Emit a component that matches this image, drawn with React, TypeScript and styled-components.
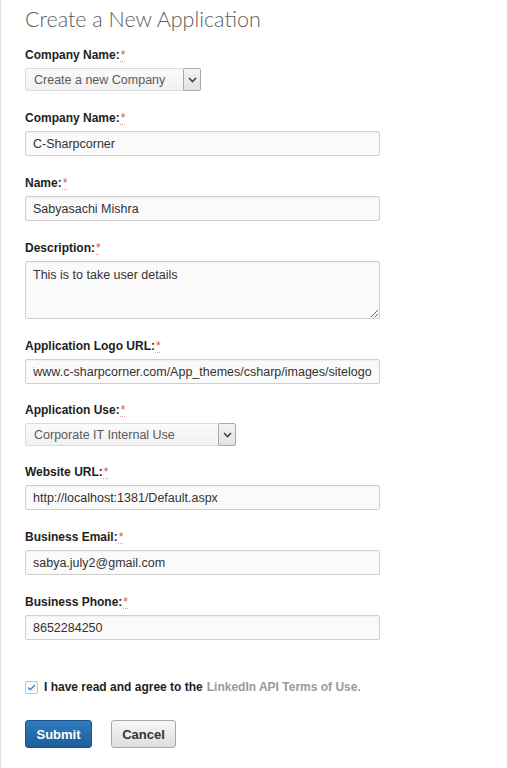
import React, { useEffect, useRef } from 'react'
import styled, { createGlobalStyle } from 'styled-components'

const GlobalStyle = createGlobalStyle`
  html, body {
    margin: 0;
    padding: 0;
    background: #fff;
  }
  body {
    font-family: 'Liberation Sans', Arial, sans-serif;
    color: #222;
  }
`

const Page = styled.div`
  box-sizing: border-box;
  min-height: 768px;
  border-left: 1px solid #e4e4e4;
  padding: 6px 0 0 24px;
`

const Title = styled.h1`
  margin: 0 0 15px;
  font-family: Lato, 'Open Sans', sans-serif;
  font-weight: 300;
  font-size: 21.5px;
  line-height: 26px;
  color: #5c5c5c;
`

const Form = styled.form`
  display: flex;
  flex-direction: column;
`

const Field = styled.div<{ $compact?: boolean }>`
  display: flex;
  flex-direction: column;
  align-items: flex-start;
  margin-bottom: ${p => (p.$compact ? 18 : 19)}px;
`

const Label = styled.label`
  font-size: 12px;
  font-weight: 700;
  line-height: 16px;
  color: #1e1e1e;
  margin-bottom: 5px;
`

const Req = styled.abbr`
  color: #d9534f;
  font-weight: 400;
  text-decoration: underline dotted #e8a0a0;
  text-underline-offset: 2px;
  margin-left: 1px;
`

const inputBase = `
  box-sizing: border-box;
  width: 355px;
  border: 1px solid #cfcfcf;
  border-radius: 2px;
  background: #fafafa;
  box-shadow: inset 0 1px 1px rgba(0, 0, 0, 0.04);
  font-family: 'Liberation Sans', Arial, sans-serif;
  font-size: 12.5px;
  color: #333;
  padding: 0 7px;
  outline: none;
`

const TextInput = styled.input`
  ${inputBase}
  height: 25px;
`

const TextArea = styled.textarea`
  ${inputBase}
  height: 58px;
  padding: 5px 7px;
  line-height: 16px;
  resize: vertical;
`

const SelectWrap = styled.div<{ $width: number }>`
  position: relative;
  width: ${p => p.$width}px;
  height: 23px;
`

const Select = styled.select`
  box-sizing: border-box;
  appearance: none;
  width: 100%;
  height: 100%;
  border: 1px solid #dcdcdc;
  border-radius: 2px;
  background: linear-gradient(#fbfbfb, #f1f1f1);
  font-family: 'Liberation Sans', Arial, sans-serif;
  font-size: 12.5px;
  color: #5a5a5a;
  padding: 0 8px;
  outline: none;
`

const Arrow = styled.span`
  position: absolute;
  top: 0;
  right: 0;
  box-sizing: border-box;
  width: 18px;
  height: 23px;
  border: 1px solid #a9a9a9;
  border-radius: 2px;
  background: linear-gradient(#f4f4f4, #e2e2e2);
  display: flex;
  align-items: center;
  justify-content: center;
  pointer-events: none;
`

const Agree = styled.div`
  display: flex;
  align-items: center;
  margin-top: 21px;
  font-size: 12px;
  font-weight: 700;
  color: #1e1e1e;
`

const Check = styled.span`
  box-sizing: border-box;
  width: 13px;
  height: 13px;
  border: 1px solid #c4c4c4;
  border-radius: 2px;
  background: #fcfcfc;
  display: flex;
  align-items: center;
  justify-content: center;
  margin-right: 6px;
`

const TermsLink = styled.a`
  color: #9a9a9a;
  text-decoration: none;
  margin-left: 4px;
`

const Buttons = styled.div`
  display: flex;
  gap: 19px;
  margin-top: 26px;
`

const Button = styled.button<{ $primary?: boolean }>`
  box-sizing: border-box;
  height: 28px;
  width: ${p => (p.$primary ? 67 : 65)}px;
  padding: 0;
  border-radius: 3px;
  font-family: 'Liberation Sans', Arial, sans-serif;
  font-size: 13px;
  font-weight: 700;
  cursor: pointer;
  border: 1px solid ${p => (p.$primary ? '#1a5488' : '#a8a8a8')};
  color: ${p => (p.$primary ? '#fff' : '#333')};
  background: ${p =>
    p.$primary
      ? 'linear-gradient(#2f7cbf, #1d5e9a)'
      : 'linear-gradient(#f7f7f7, #dedede)'};
`

const Chevron = () => (
  <svg width="9" height="6" viewBox="0 0 9 6">
    <path d="M1 1l3.5 3.5L8 1" fill="none" stroke="#444" strokeWidth="1.6" />
  </svg>
)

const Required = () => <Req title="required">*</Req>

const App = () => {
  const logoRef = useRef<HTMLInputElement>(null)

  useEffect(() => {
    if (logoRef.current) logoRef.current.scrollLeft = logoRef.current.scrollWidth
  }, [])

  return (
    <Page>
      <GlobalStyle />
      <Title>Create a New Application</Title>
      <Form onSubmit={e => e.preventDefault()}>
        <Field>
          <Label>Company Name:<Required /></Label>
          <SelectWrap $width={176}>
            <Select defaultValue="new">
              <option value="new">Create a new Company</option>
            </Select>
            <Arrow><Chevron /></Arrow>
          </SelectWrap>
        </Field>
        <Field>
          <Label>Company Name:<Required /></Label>
          <TextInput defaultValue="C-Sharpcorner" />
        </Field>
        <Field>
          <Label>Name:<Required /></Label>
          <TextInput defaultValue="Sabyasachi Mishra" />
        </Field>
        <Field>
          <Label>Description:<Required /></Label>
          <TextArea defaultValue="This is to take user details" />
        </Field>
        <Field $compact>
          <Label>Application Logo URL:<Required /></Label>
          <TextInput
            ref={logoRef}
            defaultValue="http://www.c-sharpcorner.com/App_themes/csharp/images/sitelogo"
          />
        </Field>
        <Field $compact>
          <Label>Application Use:<Required /></Label>
          <SelectWrap $width={211}>
            <Select defaultValue="corp">
              <option value="corp">Corporate IT Internal Use</option>
            </Select>
            <Arrow><Chevron /></Arrow>
          </SelectWrap>
        </Field>
        <Field>
          <Label>Website URL:<Required /></Label>
          <TextInput defaultValue="http://localhost:1381/Default.aspx" />
        </Field>
        <Field>
          <Label>Business Email:<Required /></Label>
          <TextInput defaultValue="sabya.july2@gmail.com" />
        </Field>
        <Field>
          <Label>Business Phone:<Required /></Label>
          <TextInput defaultValue="8652284250" />
        </Field>
        <Agree>
          <Check>
            <svg width="9" height="7" viewBox="0 0 9 7">
              <path d="M1 3.5l2.3 2.3L8 1" fill="none" stroke="#3a86d0" strokeWidth="1.4" />
            </svg>
          </Check>
          I have read and agree to the
          <TermsLink href="#">LinkedIn API Terms of Use.</TermsLink>
        </Agree>
        <Buttons>
          <Button $primary type="submit">Submit</Button>
          <Button type="button">Cancel</Button>
        </Buttons>
      </Form>
    </Page>
  )
}

export default App
